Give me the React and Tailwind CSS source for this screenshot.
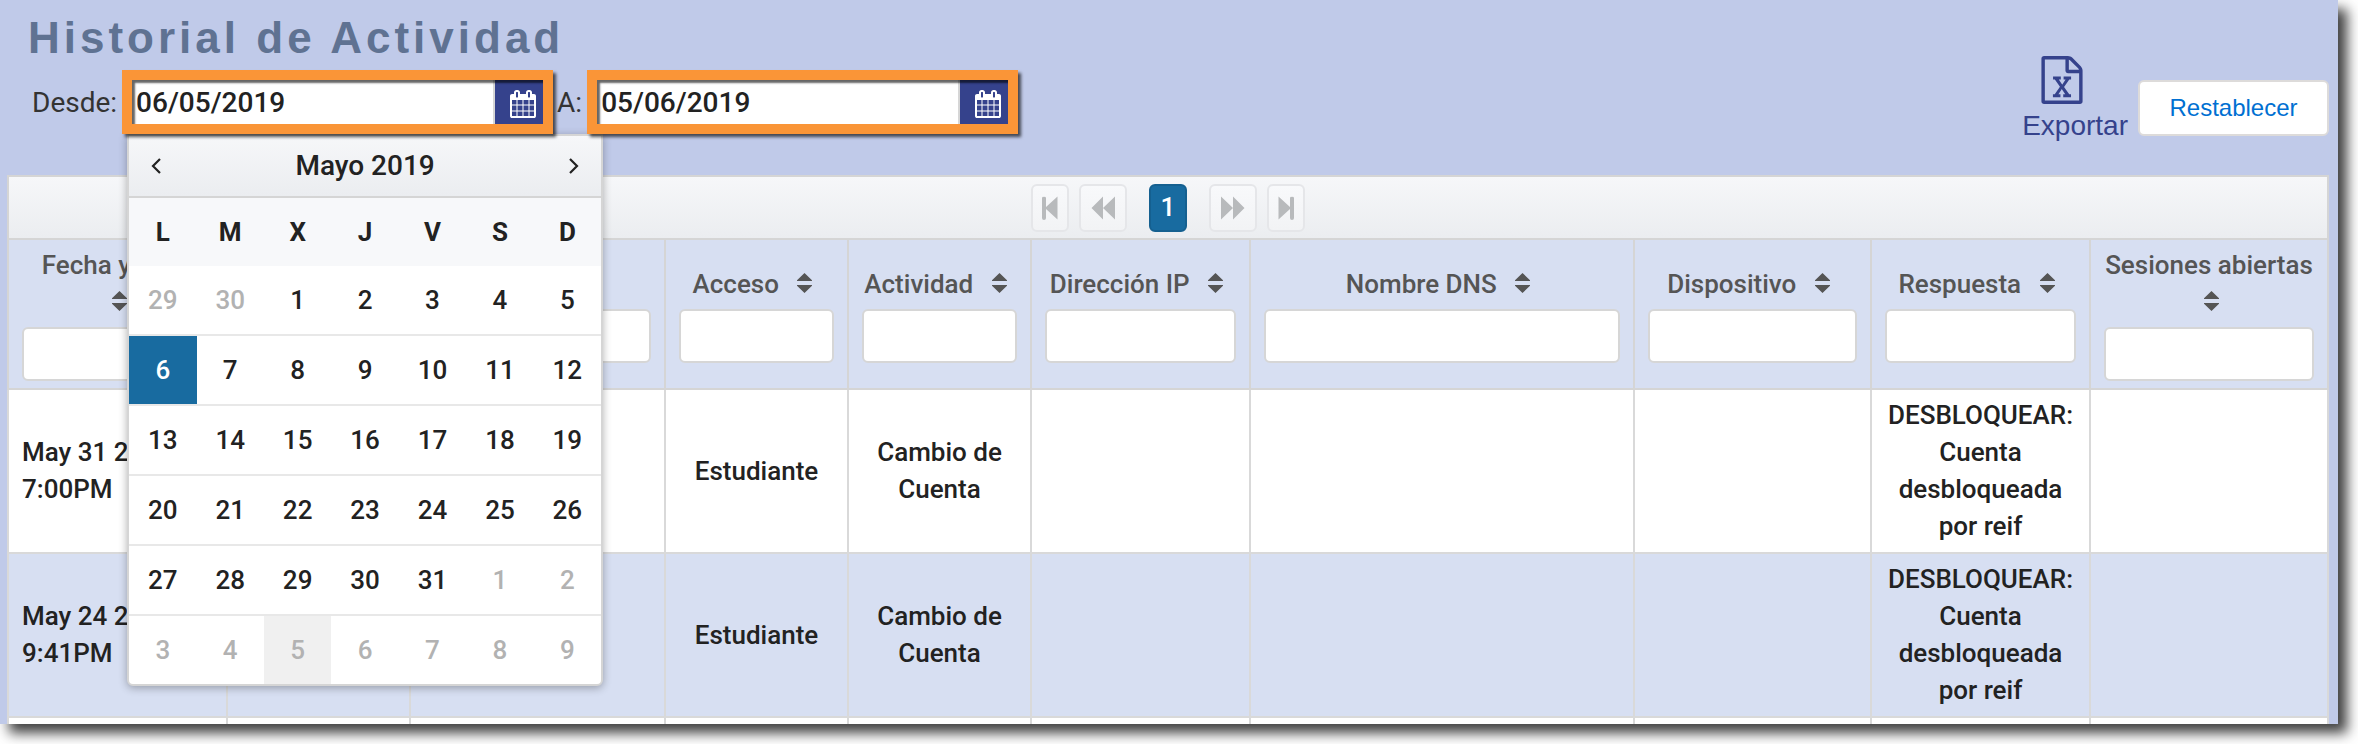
import React, { useState } from 'react';

const columns = [
  { id: 'fecha', label: 'Fecha y Hora', width: 'w-[219px]' },
  { id: 'c2', label: '', width: 'w-[183px]' },
  { id: 'c3', label: '', width: 'w-[255px]' },
  { id: 'acceso', label: 'Acceso', width: 'w-[183px]' },
  { id: 'actividad', label: 'Actividad', width: 'w-[183px]' },
  { id: 'ip', label: 'Dirección IP', width: 'w-[219px]' },
  { id: 'dns', label: 'Nombre DNS', width: 'w-[384px]' },
  { id: 'dispositivo', label: 'Dispositivo', width: 'w-[237px]' },
  { id: 'respuesta', label: 'Respuesta', width: 'w-[219px]' },
  { id: 'sesiones', label: 'Sesiones abiertas', width: 'w-[238px]' },
];

const rows = [
  { fecha: 'May 31 2019 7:00PM', acceso: 'Estudiante', actividad: 'Cambio de Cuenta', respuesta: 'DESBLOQUEAR: Cuenta desbloqueada por reif' },
  { fecha: 'May 24 2019 9:41PM', acceso: 'Estudiante', actividad: 'Cambio de Cuenta', respuesta: 'DESBLOQUEAR: Cuenta desbloqueada por reif' },
  {},
];

const weekDays = ['L', 'M', 'X', 'J', 'V', 'S', 'D'];

const weeks = [
  [29, 30, 1, 2, 3, 4, 5],
  [6, 7, 8, 9, 10, 11, 12],
  [13, 14, 15, 16, 17, 18, 19],
  [20, 21, 22, 23, 24, 25, 26],
  [27, 28, 29, 30, 31, 1, 2],
  [3, 4, 5, 6, 7, 8, 9],
];

const CalendarIcon = () => (
  <svg viewBox="0 0 1792 1792" className="h-7 w-7" fill="currentColor" aria-hidden="true">
    <path d="M192 1664h288v-288h-288v288zm352 0h320v-288h-320v288zm-352-352h288v-320h-288v320zm352 0h320v-320h-320v320zm-352-384h288v-288h-288v288zm736 736h320v-288h-320v288zm-384-736h320v-288h-320v288zm768 736h288v-288h-288v288zm-384-352h320v-320h-320v320zm-352-864v-288q0-13-9.5-22.5t-22.5-9.5h-64q-13 0-22.5 9.5t-9.5 22.5v288q0 13 9.5 22.5t22.5 9.5h64q13 0 22.5-9.5t9.5-22.5zm736 864h288v-320h-288v320zm-384-384h320v-288h-320v288zm384 0h288v-288h-288v288zm32-480v-288q0-13-9.5-22.5t-22.5-9.5h-64q-13 0-22.5 9.5t-9.5 22.5v288q0 13 9.5 22.5t22.5 9.5h64q13 0 22.5-9.5t9.5-22.5zm384-64v1280q0 52-38 90t-90 38h-1408q-52 0-90-38t-38-90v-1280q0-52 38-90t90-38h128v-96q0-66 47-113t113-47h64q66 0 113 47t47 113v96h384v-96q0-66 47-113t113-47h64q66 0 113 47t47 113v96h128q52 0 90 38t38 90z" />
  </svg>
);

const ExcelIcon = () => (
  <svg viewBox="0 0 1792 1792" className="ml-4 h-12 w-12" fill="currentColor" aria-hidden="true">
    <path d="M1596 380q28 28 48 76t20 88v1152q0 40-28 68t-68 28h-1344q-40 0-68-28t-28-68v-1600q0-40 28-68t68-28h896q40 0 88 20t76 48zm-444-244v376h376q-10-29-22-41l-313-313q-12-12-41-22zm384 1528v-1024h-416q-40 0-68-28t-28-68v-416h-768v1536h1280zm-979-234v106h281v-106h-75l103-161q5-7 10-16.5t7.5-13.5 3.5-4h2q1 4 5 10 2 4 4.5 7.5t6 8 6.5 8.5l107 161h-76v106h291v-106h-68l-192-273 195-282h67v-107h-279v107h74l-103 159q-4 7-10 16.5t-9 13.5l-2 3h-2q-1-4-5-10-6-11-17-23l-106-159h76v-107h-290v107h68l189 272-194 283h-68z" />
  </svg>
);

const SortIcon = () => (
  <svg viewBox="0 0 15 20" className="h-5 w-[15px]" fill="currentColor" aria-hidden="true">
    <path d="M7.5 0L15 7.2V8H0v-.8zM0 12h15v.8L7.5 20 0 12.8z" />
  </svg>
);

const Chevron = ({ d }) => (
  <svg viewBox="0 0 10 16" className="h-4 w-[10px]" fill="none" stroke="currentColor" strokeWidth="2.2" aria-hidden="true">
    <path d={d} />
  </svg>
);

const PageButton = ({ label, width, box, d }) => (
  <button type="button" disabled aria-label={label} className={`flex h-12 items-center justify-center rounded-md border-2 border-[#e5e6e9] bg-gradient-to-b from-[#f8f9fb] to-[#f2f3f5] text-[#b8babc] ${width}`}>
    <svg viewBox={box} className="h-6" fill="currentColor" aria-hidden="true">
      <path d={d} />
    </svg>
  </button>
);

const DateField = ({ id, label, value, onChange, children }) => (
  <div className="flex items-center">
    <label htmlFor={id} className="pt-[2px] pr-[5px] pl-1 text-[28px] leading-10 text-[#333]">{label}</label>
    <div className="relative">
      <div className="relative z-20 flex h-16 w-[431px] border-10 border-[#fa9537] shadow-[3px_3px_3px_rgba(0,0,0,0.65)] after:pointer-events-none after:absolute after:inset-0 after:shadow-[inset_3px_3px_2px_rgba(0,0,0,0.6)]">
        <input id={id} type="text" value={value} onChange={onChange} className="min-w-0 flex-1 border-r-2 border-[#d6d6d6] bg-white pt-[2px] pl-1 text-[28px] font-medium text-[#222] outline-none" />
        <button type="button" aria-label={`Calendario ${label}`} className="flex w-12 items-center justify-end bg-[#35428c] pt-1 pr-1.5 text-white">
          <CalendarIcon />
        </button>
      </div>
      {children}
    </div>
  </div>
);

const DatePicker = () => (
  <div className="absolute top-full left-[5px] z-10 w-[476px] overflow-hidden rounded-b-md border-2 border-[#d5d5d5] bg-white text-[#222] shadow-[0_2px_8px_rgba(0,0,0,0.3)]">
    <div className="flex h-[62px] items-center justify-between border-b-2 border-[#d5d5d5] bg-gradient-to-b from-[#f6f7f9] to-[#ebedf0] px-[22px]">
      <button type="button" aria-label="Mes anterior"><Chevron d="M9 1L2 8l7 7" /></button>
      <span className="text-[28px] leading-10 font-medium">Mayo 2019</span>
      <button type="button" aria-label="Mes siguiente"><Chevron d="M1 1l7 7-7 7" /></button>
    </div>
    <table className="w-full table-fixed border-separate border-spacing-0 text-[26px]">
      <thead>
        <tr className="h-[68px] bg-[#f7f8fa]">
          {weekDays.map(d => <th key={d} scope="col" className="p-0 font-bold">{d}</th>)}
        </tr>
      </thead>
      <tbody>
        {weeks.map((week, i) => (
          <tr key={i}>
            {week.map((day, j) => {
              const other = (i === 0 && day > 20) || (i > 3 && day < 20);
              const selected = i === 1 && day === 6;
              const today = i === 5 && day === 5;
              return (
                <td key={j} className={`p-0 ${i > 0 ? 'border-t-2 border-[#e8e8e8]' : ''}`}>
                  <button type="button" className={`block h-[68px] w-full font-medium ${selected ? 'bg-[#186ba0] text-white' : ''} ${today ? 'bg-[#f0f0f0]' : ''} ${other ? 'text-[#b2b2b2]' : ''}`}>{day}</button>
                </td>
              );
            })}
          </tr>
        ))}
      </tbody>
    </table>
  </div>
);

export default function App() {
  const [from, setFrom] = useState('06/05/2019');
  const [to, setTo] = useState('05/06/2019');

  return (
    <div className="h-screen overflow-hidden bg-white pr-5 pb-5 font-[Roboto,sans-serif]">
      <main className="h-full overflow-hidden bg-[#c0cae9] shadow-[9px_9px_12px_rgba(0,0,0,0.75)]">
        <header className="flex items-start justify-between pr-[9px] pb-[31px] pl-7">
          <div>
            <h1 className="pt-[10px] pb-1 font-['Liberation_Sans',sans-serif] text-[44px] leading-[56px] font-bold tracking-[4px] text-[#5f7292]">Historial de Actividad</h1>
            <div className="flex">
              <DateField id="desde" label="Desde:" value={from} onChange={e => setFrom(e.target.value)}>
                <DatePicker />
              </DateField>
              <DateField id="hasta" label="A:" value={to} onChange={e => setTo(e.target.value)} />
            </div>
          </div>
          <div className="flex items-end gap-[10px] pt-14 font-['Liberation_Sans',sans-serif]">
            <a href="#exportar" className="flex flex-col items-start gap-1 text-[28px] leading-9 text-[#35428c]">
              <ExcelIcon />
              Exportar
            </a>
            <button type="button" className="mb-2 h-14 w-[191px] rounded-md border-2 border-[#dddbda] bg-white text-2xl text-[#0070d2]">Restablecer</button>
          </div>
        </header>

        <section className="pr-[9px] pl-[7px]">
          <nav aria-label="Paginación" className="flex h-[63px] items-center justify-center gap-[10px] border-2 border-b-0 border-[#d5d5d5] bg-gradient-to-b from-[#f6f7f9] to-[#ebedf0]">
            <PageButton label="Primera" width="w-[38px]" box="0 0 16 24" d="M2 1a1.5 1.5 0 0 1 2 1v9L15.5 .5v23L4 13v9a1.5 1.5 0 0 1-4 0V2a1.5 1.5 0 0 1 2-1z" />
            <PageButton label="Anterior" width="w-12" box="0 0 24 24" d="M12 .5V12L24 .5v23L12 12v11.5L.5 12z" />
            <button type="button" aria-current="page" className="mx-3 h-12 w-[38px] rounded-md border-2 border-[#156090] bg-[#186ba0] text-[26px] font-medium text-white">1</button>
            <PageButton label="Siguiente" width="w-12" box="0 0 24 24" d="M12 .5V12L0 .5v23L12 12v11.5L23.5 12z" />
            <PageButton label="Última" width="w-[38px]" box="0 0 16 24" d="M14 1a1.5 1.5 0 0 0-2 1v9L.5 .5v23L12 13v9a1.5 1.5 0 0 0 4 0V2a1.5 1.5 0 0 0-2-1z" />
          </nav>
          <table className="w-full table-fixed border-collapse text-[26px] leading-[37px] text-[#222]">
            <colgroup>
              {columns.map(c => <col key={c.id} className={c.width} />)}
            </colgroup>
            <thead>
              <tr className="bg-[#d7dff2] text-[#555]">
                {columns.map(c => (
                  <th key={c.id} scope="col" className="border-2 border-[#d5d5d5] px-[13px] py-[7px] text-center align-middle font-medium">
                    <label htmlFor={`filtro-${c.id}`}>{c.label}</label>{' '}
                    <button type="button" aria-label={`Ordenar ${c.label}`} className="mr-2 ml-3"><SortIcon /></button>
                    <input id={`filtro-${c.id}`} type="text" className="mt-[6px] block h-[54px] w-full rounded-md border-2 border-[#d6d6d6] bg-white px-2 outline-none" />
                  </th>
                ))}
              </tr>
            </thead>
            <tbody>
              {rows.map((row, i) => (
                <tr key={i} className={`h-[164px] ${i % 2 === 1 ? 'bg-[#d7dff2]' : 'bg-white'}`}>
                  {columns.map(c => (
                    <td key={c.id} className={`border-2 border-[#d9d9d9] px-[13px] py-[7px] font-medium ${c.id === 'fecha' ? 'text-left' : 'text-center'}`}>{row[c.id]}</td>
                  ))}
                </tr>
              ))}
            </tbody>
          </table>
        </section>
      </main>
    </div>
  );
}
